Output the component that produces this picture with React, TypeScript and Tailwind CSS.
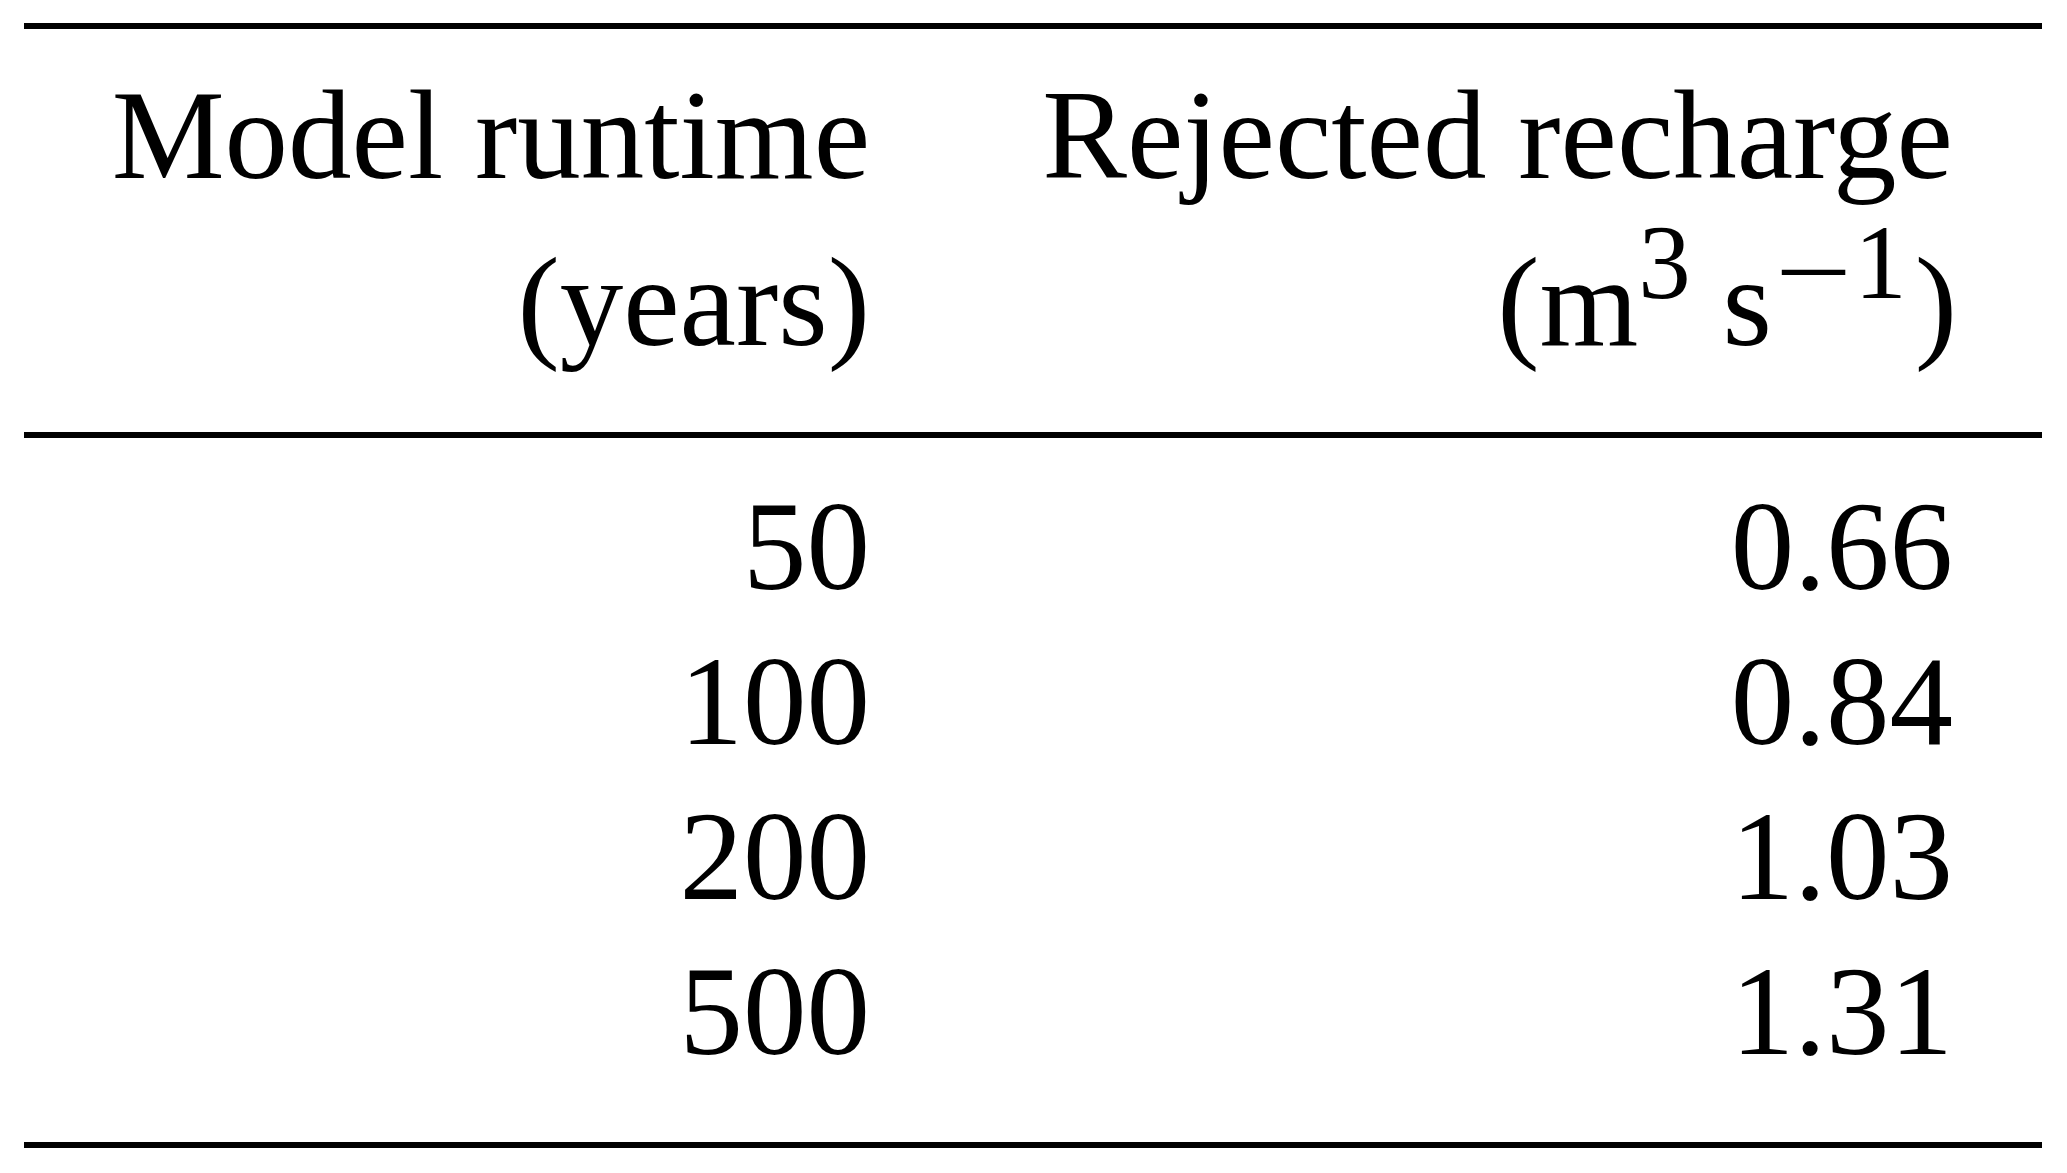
export default function App() {
  const rows = [
    { years: '50', recharge: '0.66' },
    { years: '100', recharge: '0.84' },
    { years: '200', recharge: '1.03' },
    { years: '500', recharge: '1.31' },
  ];

  return (
    <div className="min-h-screen bg-white px-[24px] pt-[23px] pr-[25px] font-['Liberation_Serif','Times_New_Roman',serif] text-[127px] text-black">
      {/* top rule */}
      <div className="h-[6px] bg-black" />

      {/* header */}
      <div className="grid grid-cols-[932px_1086px] pt-[23px] pb-[46px] leading-[167px]">
        <div className="pr-[86px] text-right">
          <div>Model runtime</div>
          <div>(years)</div>
        </div>
        <div className="text-right">
          <div className="pr-[89px]">Rejected recharge</div>
          <div className="pr-[85px]">
            (m
            <span className="relative -top-[47px] text-[105px] leading-none">3</span> s
            <span className="relative -top-[47px] ml-[3px] text-[105px] leading-none">
              <span className="relative top-[9px] inline-block origin-left scale-x-[1.3]">−</span>
              <span className="ml-[20px]">1</span>
            </span>
            <span className="ml-[8px]">)</span>
          </div>
        </div>
      </div>

      {/* mid rule */}
      <div className="h-[6px] bg-black" />

      {/* body */}
      <div className="grid grid-cols-[932px_1086px] pt-[31px] pb-[53px] leading-[155px]">
        {rows.map(row => (
          <div key={row.years} className="contents">
            <div className="pr-[86px] text-right">{row.years}</div>
            <div className="pr-[89px] text-right">{row.recharge}</div>
          </div>
        ))}
      </div>

      {/* bottom rule */}
      <div className="h-[6px] bg-black" />
    </div>
  );
}
